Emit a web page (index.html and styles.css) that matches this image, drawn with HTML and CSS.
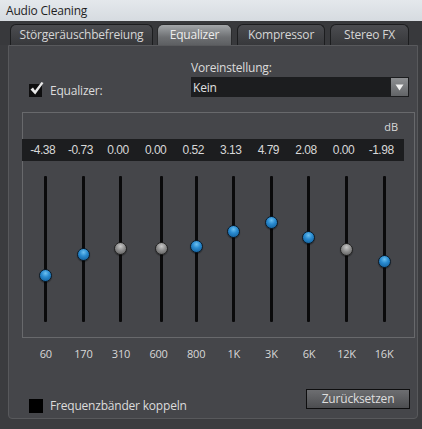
FILE: index.html
```html
<!DOCTYPE html>
<html lang="de">
<head>
<meta charset="utf-8">
<title>Audio Cleaning</title>
<link rel="stylesheet" href="styles.css">
</head>
<body>
<div class="window">
  <div class="titlebar">Audio Cleaning</div>
  <div class="tabs">
    <div class="tab t1">Störgeräuschbefreiung</div>
    <div class="tab t2 active">Equalizer</div>
    <div class="tab t3">Kompressor</div>
    <div class="tab t4">Stereo FX</div>
  </div>
  <div class="panel">
    <div class="top-row">
      <div class="check">
        <span class="box">
          <svg class="tick" width="15" height="15" viewBox="0 0 15 15"><path d="M1.5 8.5 L4 6.5 L6 9.5 L12.5 1 L14.5 2 L6.2 13.5 Z" fill="#e8e8e8"/></svg>
        </span>
        <span class="check-label">Equalizer:</span>
      </div>
      <div class="preset">
        <div class="preset-label">Voreinstellung:</div>
        <div class="select">
          <span class="select-value">Kein</span>
          <span class="arrow"><svg width="9" height="7" viewBox="0 0 9 7"><path d="M0.5 0.5 H8.5 L4.5 6.5 Z" fill="#f2f2f2"/></svg></span>
        </div>
      </div>
    </div>
    <div class="eqbox">
      <div class="db">dB</div>
      <div class="values">
        <span>-4.38</span><span>-0.73</span><span>0.00</span><span>0.00</span><span>0.52</span>
        <span>3.13</span><span>4.79</span><span>2.08</span><span>0.00</span><span>-1.98</span>
      </div>
      <div class="sliders">
        <div class="slider"><div class="track"><div class="knob blue" style="top:99px"></div></div></div>
        <div class="slider"><div class="track"><div class="knob blue" style="top:78px"></div></div></div>
        <div class="slider"><div class="track"><div class="knob gray" style="top:72px"></div></div></div>
        <div class="slider s4"><div class="track"><div class="knob gray" style="top:72px"></div></div></div>
        <div class="slider"><div class="track"><div class="knob blue" style="top:70px"></div></div></div>
        <div class="slider"><div class="track"><div class="knob blue" style="top:55px"></div></div></div>
        <div class="slider"><div class="track"><div class="knob blue" style="top:46px"></div></div></div>
        <div class="slider"><div class="track"><div class="knob blue" style="top:61px"></div></div></div>
        <div class="slider"><div class="track"><div class="knob gray" style="top:73px"></div></div></div>
        <div class="slider"><div class="track"><div class="knob blue" style="top:85px"></div></div></div>
      </div>
    </div>
    <div class="freqs">
      <span>60</span><span>170</span><span>310</span><span>600</span><span>800</span>
      <span>1K</span><span>3K</span><span>6K</span><span>12K</span><span>16K</span>
    </div>
    <div class="bottom-row">
      <div class="check2">
        <span class="box2"></span>
        <span class="check-label">Frequenzbänder koppeln</span>
      </div>
      <div class="button">Zurücksetzen</div>
    </div>
  </div>
</div>
</body>
</html>
```

FILE: styles.css
```css
* { box-sizing: border-box; }
html, body { margin: 0; padding: 0; }
body {
  width: 422px;
  height: 429px;
  background: #3b3c3f;
  font-family: "Open Sans", "Noto Sans", sans-serif;
  overflow: hidden;
}
.window { width: 422px; height: 429px; display: flex; flex-direction: column; }

.titlebar {
  height: 21px;
  background: linear-gradient(#e4e8ec, #d6dbe0);
  color: #1e1e1e;
  font-size: 12px;
  line-height: 21px;
  padding-left: 6px;
  letter-spacing: -0.2px;
}

.tabs {
  height: 24px;
  display: flex;
  align-items: flex-end;
  padding-left: 10px;
  background: #38393c;
}
.tab {
  height: 21px;
  border: 1px solid #1c1d1f;
  border-bottom: none;
  border-radius: 6px 6px 0 0;
  background: linear-gradient(#4b4c50, #37383b);
  color: #d6d6d6;
  font-size: 12px;
  line-height: 20px;
  text-align: center;
  letter-spacing: -0.2px;
}
.t1 { width: 143px; }
.t2 { width: 75px; margin-left: 4px; }
.t3 { width: 88px; margin-left: 5px; }
.t4 { width: 79px; margin-left: 5px; }
.tab.active {
  background: linear-gradient(#a3a6a9, #6e7073 60%, #5d5f62);
  color: #ececec;
  border-color: #2a2b2d;
}

.panel {
  margin-left: 8px;
  width: 410px;
  height: 374px;
  border: 1px solid #58595c;
  border-radius: 0 0 4px 4px;
  background: #45464a;
  display: flex;
  flex-direction: column;
}

.top-row {
  display: grid;
  grid-template-columns: 182px 218px;
  padding-top: 14px;
  align-items: end;
}
.check {
  display: flex;
  align-items: center;
  padding-left: 20px;
  height: 20px;
  margin-bottom: -3px;
}
.box {
  position: relative;
  width: 13px;
  height: 13px;
  background: #0e0e0f;
}
.tick {
  position: absolute;
  left: 0;
  top: -3px;
  display: block;
}
.check-label {
  color: #dcdcdc;
  font-size: 12px;
  margin-left: 8px;
  letter-spacing: -0.2px;
}
.preset-label {
  color: #dcdcdc;
  font-size: 12px;
  line-height: 15px;
  margin-bottom: 2px;
  letter-spacing: -0.2px;
}
.select {
  height: 20px;
  background: #1c1d1f;
  display: flex;
  align-items: center;
  justify-content: space-between;
  padding: 1px;
}
.select-value {
  color: #e0e0e0;
  font-size: 12px;
  padding-left: 1px;
  letter-spacing: -0.2px;
}
.arrow {
  width: 17px;
  height: 18px;
  background: linear-gradient(#8d8f92, #626467);
  display: flex;
  align-items: center;
  justify-content: center;
}
.arrow svg { display: block; }

.eqbox {
  margin-top: 15px;
  margin-left: 13px;
  width: 393px;
  height: 226px;
  border: 1px solid #68696c;
}
.db {
  color: #d8d8d8;
  font-family: "Open Sans", sans-serif;
  font-size: 11px;
  line-height: 14px;
  text-align: right;
  padding-right: 16px;
  margin-top: 7px;
}
.values {
  margin-top: 5px;
  width: 382px;
  height: 22px;
  background: #1c1d1f;
  display: grid;
  grid-template-columns: repeat(10, 37.6px);
  padding-left: 2px;
  align-items: center;
  margin-left: -1px;
}
.values span {
  color: #d8d8d8;
  font-family: "Liberation Sans", Arial, sans-serif;
  font-size: 12px;
  text-align: center;
  letter-spacing: -0.5px;
}
.sliders {
  margin-top: 15px;
  display: grid;
  grid-template-columns: repeat(10, 37.6px);
  padding-left: 4px;
  height: 146px;
}
.slider { display: flex; justify-content: center; }
.slider.s4 { padding-left: 6px; }
.track {
  position: relative;
  width: 3px;
  height: 146px;
  background: #0a0a0b;
  border-radius: 1px;
}
.knob {
  position: absolute;
  left: -5px;
  width: 13px;
  height: 13px;
  margin-top: -6px;
  border-radius: 50%;
  border: 1px solid #0b1b29;
  box-shadow: 0 1px 1px rgba(0,0,0,0.4);
}
.knob.blue { background: radial-gradient(circle at 50% 30%, #6cc0f0 0%, #2a8bd0 40%, #0d5690 100%); }
.knob.gray { background: radial-gradient(circle at 50% 30%, #c8c8c8 0%, #8e8e8e 45%, #555 100%); border-color: #222; }

.freqs {
  margin-top: 9px;
  display: grid;
  grid-template-columns: repeat(10, 37.6px);
  padding-left: 18px;
  line-height: 14px;
}
.freqs span {
  color: #d8d8d8;
  font-size: 11px;
  text-align: center;
  letter-spacing: -0.2px;
}

.bottom-row {
  margin-top: 28px;
  display: flex;
  justify-content: space-between;
  align-items: flex-start;
  padding-left: 20px;
  padding-right: 7px;
}
.check2 {
  display: flex;
  align-items: center;
  margin-top: 8px;
}
.box2 {
  width: 14px;
  height: 14px;
  background: #000;
}
.check2 .check-label { margin-left: 7px; }
.button {
  width: 104px;
  height: 20px;
  border: 1px solid #0e0e0f;
  background: linear-gradient(#6d6e71, #4c4d50);
  color: #dedede;
  font-size: 12px;
  line-height: 18px;
  text-align: center;
  letter-spacing: -0.2px;
}
```
